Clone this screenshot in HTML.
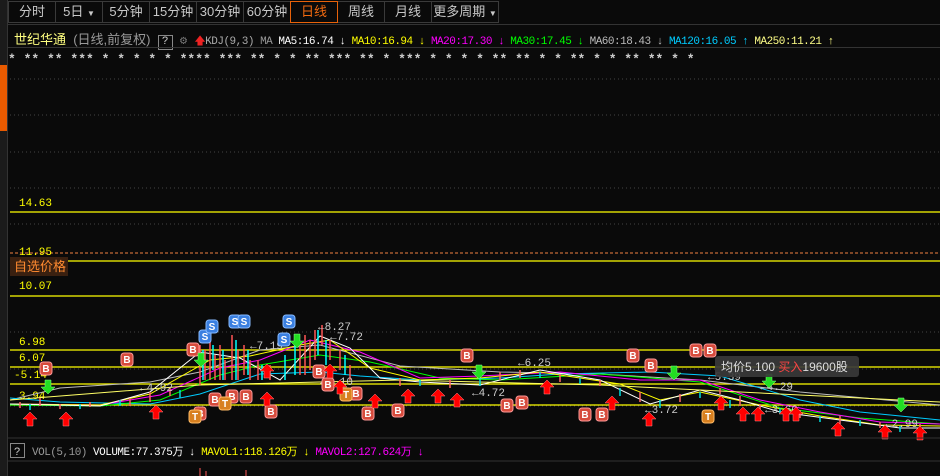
<!DOCTYPE html>
<html><head><meta charset="utf-8"><style>
*{margin:0;padding:0;box-sizing:border-box}
body{width:940px;height:476px;background:#0a0a0a;overflow:hidden;font-family:"Liberation Sans","Noto Sans CJK SC",sans-serif;position:relative}
.tabs{position:absolute;left:8px;top:1px;height:22px;display:flex}
.tab{height:22px;border:1px solid #3a3a3a;margin-right:-1px;color:#c8c8c8;font-size:13px;line-height:20px;text-align:center}
.tab.on{border-color:#e8620a;color:#f26a10;position:relative;z-index:2}
.mono{font-family:"Liberation Mono","Noto Sans CJK SC",monospace}
</style></head><body>
<div style="position:absolute;left:0;top:0;width:8px;height:476px;background:#1b1b1b;border-right:1px solid #333"></div>
<div style="position:absolute;left:0;top:65px;width:7px;height:66px;background:#e85a00"></div>
<div class="tabs">
<div class="tab" style="width:48px">分时</div>
<div class="tab" style="width:48px">5日 <span style="font-size:8px">▼</span></div>
<div class="tab" style="width:48px">5分钟</div>
<div class="tab" style="width:48px">15分钟</div>
<div class="tab" style="width:48px">30分钟</div>
<div class="tab" style="width:48px">60分钟</div>
<div class="tab on" style="width:48px">日线</div>
<div class="tab" style="width:48px">周线</div>
<div class="tab" style="width:48px">月线</div>
<div class="tab" style="width:68px">更多周期 <span style="font-size:8px">▼</span></div>
</div>
<div style="position:absolute;left:8px;top:24px;width:932px;height:1px;background:#333"></div>
<div style="position:absolute;left:14px;top:29px;font-size:12px;white-space:nowrap;color:#aaa" class="mono">
<span style="color:#ffff80;font-family:'Liberation Sans','Noto Sans CJK SC',sans-serif;font-size:13px">世纪华通</span>
<span style="color:#999;font-family:'Liberation Sans','Noto Sans CJK SC',sans-serif;font-size:13px">(日线,前复权)</span>
<span style="display:inline-block;border:1px solid #888;width:15px;height:15px;text-align:center;line-height:13px;font-size:11px;color:#ccc">?</span>
<span style="color:#777">⚙</span>
<span style="font-size:11px;letter-spacing:-0.5px"><span style="color:#e22">🡅</span><span style="color:#aaa">KDJ(9,3)</span> <span style="color:#999">MA</span> <span style="color:#fff">MA5:16.74 ↓</span> <span style="color:#ff0">MA10:16.94 ↓</span> <span style="color:#f0f">MA20:17.30 ↓</span> <span style="color:#0f0">MA30:17.45 ↓</span> <span style="color:#bbb">MA60:18.43 ↓</span> <span style="color:#0cf">MA120:16.05 ↑</span> <span style="color:#ff8">MA250:11.21 ↑</span></span>
</div>
<div style="position:absolute;left:8px;top:47px;width:932px;height:1px;background:#333"></div>
<svg style="position:absolute;left:0;top:0" width="940" height="476">
<g fill="#ccc" font-size="13" font-weight="bold" font-family="Liberation Mono">
<text x="8" y="63">* ** ** *** * * * * * **** *** ** * * ** *** ** * *** * * * * ** ** * * ** * * ** ** * *</text>
</g>
<g stroke="#444" stroke-dasharray="1,3">
<line x1="10" y1="79" x2="940" y2="79"/><line x1="10" y1="115" x2="940" y2="115"/><line x1="10" y1="152" x2="940" y2="152"/><line x1="10" y1="188" x2="940" y2="188"/><line x1="10" y1="224" x2="940" y2="224"/><line x1="10" y1="332" x2="940" y2="332"/><line x1="10" y1="369" x2="940" y2="369"/><line x1="10" y1="406" x2="940" y2="406"/>
</g>
<g stroke="#ff0" stroke-width="1.2">
<line x1="10" y1="212" x2="940" y2="212"/><line x1="10" y1="261" x2="940" y2="261"/><line x1="10" y1="296" x2="940" y2="296"/><line x1="10" y1="350" x2="940" y2="350"/><line x1="10" y1="367" x2="940" y2="367"/><line x1="10" y1="384" x2="940" y2="384"/><line x1="10" y1="405" x2="940" y2="405"/>
</g>
<line x1="10" y1="253" x2="940" y2="253" stroke="#f08040" stroke-dasharray="3,2"/>
<rect x="10" y="257" width="58" height="19" fill="#3a2010"/>
<text x="14" y="271" fill="#ff8a30" font-size="13" font-family="Noto Sans CJK SC">自选价格</text>
<g fill="#ff0" font-size="11" font-family="Liberation Mono">
<text x="19" y="206">14.63</text><text x="19" y="255">11.95</text><text x="19" y="289">10.07</text><text x="19" y="345">6.98</text><text x="19" y="361">6.07</text><text x="14" y="378">-5.14</text><text x="19" y="399">3.94</text>
</g>
<g fill="none" stroke-width="1">
<polyline stroke="#bbb" points="10,400 60,388 150,382 200,372 260,350 320,345 400,366 500,372 600,374 700,380 800,392 940,405"/>
<polyline stroke="#0cf" points="10,398 60,402 150,404 200,394 260,374 320,372 360,376 420,380 500,378 560,374 650,372 720,376 800,400 860,412 940,420"/>
<polyline stroke="#0f0" points="10,405 100,406 160,400 220,375 260,365 320,355 370,362 440,378 500,380 600,374 700,382 780,408 860,418 940,424"/>
<polyline stroke="#f0f" points="10,404 100,405 160,395 220,368 260,360 310,340 360,352 420,378 480,376 560,372 640,380 700,380 760,400 820,412 880,422 940,424"/>
<polyline stroke="#ff0" points="10,404 100,405 150,394 210,360 250,356 300,345 330,340 370,368 420,380 480,378 540,372 620,384 660,400 700,392 760,405 820,416 880,425 940,426"/>
<polyline stroke="#fff" points="10,404 100,406 150,392 200,352 240,358 280,380 320,336 350,348 380,378 420,382 480,385 540,370 600,380 650,404 700,390 740,400 780,412 840,420 900,428 940,428"/>
<polyline stroke="#ff6" points="10,400 200,385 400,380 600,385 800,395 940,402"/>
</g>
<g stroke-width="1.5">
<path d="M200 345v40M205 350v30M210 340v40M215 355v25M220 345v35M225 360v20M232 335v45M238 350v30M244 345v30M250 360v20M258 360v20M270 365v15M300 345v30M305 335v40M310 340v30M315 330v30M322 325v20M330 340v20M340 350v20M350 365v15" stroke="#f55"/>
<path d="M203 350v30M213 345v25M223 350v30M236 340v40M248 350v25M262 365v15M285 355v25M295 345v30M318 330v25M326 340v25M345 355v20" stroke="#0ff"/>
<path d="M20 402v6M40 398v8M60 404v5M90 402v5M130 398v8M150 392v10M170 388v8M400 378v8M450 380v8M500 372v8M520 370v8M560 374v8M600 380v6M640 392v10M680 394v8M720 388v6M740 396v10M760 404v10M800 410v8M840 416v8M880 422v6M920 424v6" stroke="#f66"/>
<path d="M30 404v6M80 404v5M120 400v6M180 390v8M420 380v6M480 378v8M540 372v6M580 378v6M620 388v8M660 400v8M700 392v6M730 400v8M780 408v6M820 416v6M860 420v6M900 426v6" stroke="#0dd"/>
</g>
<g fill="#ccc" font-size="11" font-family="Liberation Mono">
<text x="140" y="391">←4.92</text><text x="250" y="349">←7.19</text><text x="318" y="330">←8.27</text><text x="330" y="340">←7.72</text><text x="320" y="385">←5.10</text><text x="518" y="366">←6.25</text><text x="472" y="396">←4.72</text><text x="645" y="413">←3.72</text><text x="765" y="413">←3.60</text><text x="885" y="427">←2.99</text><text x="708" y="380">←5.39</text><text x="760" y="390">←4.29</text>
</g>
<g font-size="10" font-weight="bold" font-family="Liberation Sans" text-anchor="middle">
<g fill="#d64b3c" stroke="#f99"><rect x="121" y="353" width="12" height="13" rx="3"/><rect x="40" y="362" width="12" height="13" rx="3"/><rect x="187" y="343" width="12" height="13" rx="3"/><rect x="461" y="349" width="12" height="13" rx="3"/><rect x="627" y="349" width="12" height="13" rx="3"/><rect x="690" y="344" width="12" height="13" rx="3"/><rect x="704" y="344" width="12" height="13" rx="3"/><rect x="645" y="359" width="12" height="13" rx="3"/><rect x="194" y="407" width="12" height="13" rx="3"/><rect x="209" y="393" width="12" height="13" rx="3"/><rect x="240" y="390" width="12" height="13" rx="3"/><rect x="265" y="405" width="12" height="13" rx="3"/><rect x="350" y="387" width="12" height="13" rx="3"/><rect x="362" y="407" width="12" height="13" rx="3"/><rect x="392" y="404" width="12" height="13" rx="3"/><rect x="501" y="399" width="12" height="13" rx="3"/><rect x="516" y="396" width="12" height="13" rx="3"/><rect x="579" y="408" width="12" height="13" rx="3"/><rect x="596" y="408" width="12" height="13" rx="3"/><rect x="313" y="365" width="12" height="13" rx="3"/><rect x="322" y="378" width="12" height="13" rx="3"/><rect x="226" y="390" width="12" height="13" rx="3"/></g>
<g fill="#fff"><text x="127" y="363">B</text><text x="46" y="372">B</text><text x="193" y="353">B</text><text x="467" y="359">B</text><text x="633" y="359">B</text><text x="696" y="354">B</text><text x="710" y="354">B</text><text x="651" y="369">B</text><text x="200" y="417">B</text><text x="215" y="403">B</text><text x="246" y="400">B</text><text x="271" y="415">B</text><text x="356" y="397">B</text><text x="368" y="417">B</text><text x="398" y="414">B</text><text x="507" y="409">B</text><text x="522" y="406">B</text><text x="585" y="418">B</text><text x="602" y="418">B</text><text x="319" y="375">B</text><text x="328" y="388">B</text><text x="232" y="400">B</text></g>
<g fill="#3a7fe0" stroke="#8bf"><rect x="199" y="330" width="12" height="13" rx="3"/><rect x="206" y="320" width="12" height="13" rx="3"/><rect x="229" y="315" width="12" height="13" rx="3"/><rect x="238" y="315" width="12" height="13" rx="3"/><rect x="283" y="315" width="12" height="13" rx="3"/><rect x="278" y="333" width="12" height="13" rx="3"/></g>
<g fill="#fff"><text x="205" y="340">S</text><text x="212" y="330">S</text><text x="235" y="325">S</text><text x="244" y="325">S</text><text x="289" y="325">S</text><text x="284" y="343">S</text></g>
<g fill="#d88020" stroke="#fb6"><rect x="189" y="410" width="12" height="13" rx="3"/><rect x="219" y="397" width="12" height="13" rx="3"/><rect x="702" y="410" width="12" height="13" rx="3"/><rect x="340" y="388" width="12" height="13" rx="3"/></g>
<g fill="#fff"><text x="195" y="420">T</text><text x="225" y="407">T</text><text x="708" y="420">T</text><text x="346" y="398">T</text></g>
</g>
<g fill="#f00" stroke="#f88" stroke-width="0.5">
<path id="ua" d="M30 412l7 7h-4v7h-6v-7h-4z"/>
<use href="#ua" x="36" y="0"/><use href="#ua" x="126" y="-7"/><use href="#ua" x="237" y="-20"/><use href="#ua" x="310" y="-32"/><use href="#ua" x="345" y="-18"/><use href="#ua" x="378" y="-23"/><use href="#ua" x="408" y="-23"/><use href="#ua" x="427" y="-19"/><use href="#ua" x="517" y="-32"/><use href="#ua" x="582" y="-16"/><use href="#ua" x="619" y="0"/><use href="#ua" x="691" y="-16"/><use href="#ua" x="713" y="-5"/><use href="#ua" x="728" y="-5"/><use href="#ua" x="756" y="-5"/><use href="#ua" x="766" y="-5"/><use href="#ua" x="808" y="10"/><use href="#ua" x="855" y="13"/><use href="#ua" x="890" y="14"/><use href="#ua" x="237" y="-48"/><use href="#ua" x="300" y="-48"/>
</g>
<g fill="#2d2" stroke="#8f8" stroke-width="0.5">
<path id="da" d="M45 380h6v7h4l-7 7l-7-7h4z"/>
<use href="#da" x="153" y="-27"/><use href="#da" x="249" y="-46"/><use href="#da" x="431" y="-15"/><use href="#da" x="626" y="-14"/><use href="#da" x="721" y="-6"/><use href="#da" x="853" y="18"/>
</g>
<rect x="715" y="356" width="144" height="21" rx="3" fill="#3a3a3a" opacity="0.92"/>
<text x="721" y="371" font-size="12" fill="#ddd" font-family="Liberation Sans,Noto Sans CJK SC"><tspan>均价5.100 </tspan><tspan fill="#f44">买入</tspan><tspan>19600股</tspan></text>
<line x1="8" y1="438" x2="940" y2="438" stroke="#333"/>
<line x1="8" y1="461" x2="940" y2="461" stroke="#333"/>
<rect x="10.5" y="443.5" width="14" height="14" fill="none" stroke="#888"/>
<text x="14" y="455" font-size="11" fill="#ccc">?</text>
<text x="32" y="455" font-size="11" font-family="Liberation Mono,Noto Sans CJK SC" letter-spacing="-0.5"><tspan fill="#999">VOL(5,10) </tspan><tspan fill="#fff">VOLUME:77.375万 ↓ </tspan><tspan fill="#ff0">MAVOL1:118.126万 ↓ </tspan><tspan fill="#f0f">MAVOL2:127.624万 ↓</tspan></text>
<path d="M200 476v-8M206 476v-5M246 476v-6" stroke="#f55"/>
</svg>
</body></html>
